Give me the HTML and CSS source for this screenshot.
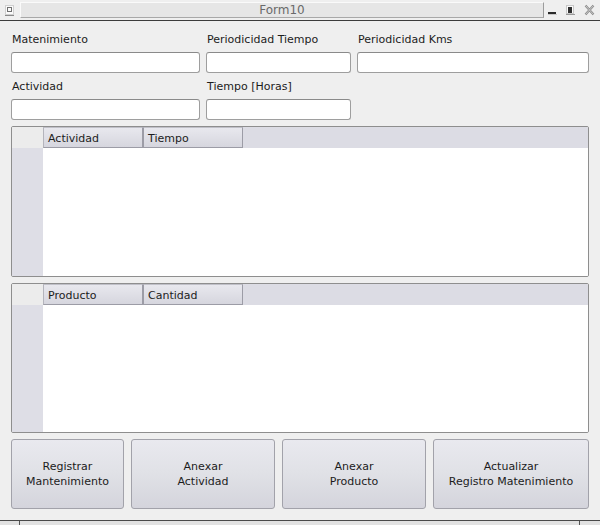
FILE: index.html
```html
<!DOCTYPE html>
<html>
<head>
<meta charset="utf-8">
<title>Form10</title>
<link rel="stylesheet" href="styles.css">
</head>
<body>
<div class="window">
  <div class="titlebar">
    <svg class="menu-icon" width="9" height="11" viewBox="0 0 9 11">
      <rect x="0.5" y="0.5" width="8" height="9" fill="#fafafa" stroke="#d0d0d0"/>
      <rect x="2.5" y="2.5" width="4" height="4" fill="none" stroke="#707070"/>
      <line x1="0" y1="10.5" x2="9" y2="10.5" stroke="#8a8a8a"/>
    </svg>
    <div class="title">Form10</div>
    <div class="wm-buttons">
      <svg width="9" height="11" viewBox="0 0 9 11"><rect x="0" y="7" width="8" height="2" fill="#2a2a2a"/><rect x="0" y="9" width="9" height="1" fill="#c8c8c8"/></svg>
      <svg width="9" height="11" viewBox="0 0 9 11"><rect x="0.5" y="0.5" width="7" height="8" fill="#fafafa" stroke="#c8c8c8"/><rect x="2" y="2" width="4" height="6" fill="#303030"/><rect x="0" y="9" width="9" height="1" fill="#9a9a9a"/></svg>
      <svg width="11" height="12" viewBox="0 0 11 12"><path d="M1.5 1.5 L9.5 10.5 M9.5 1.5 L1.5 10.5" stroke="#8a8a8a" stroke-width="2.2"/><path d="M1.5 1.5 L9.5 10.5 M9.5 1.5 L1.5 10.5" stroke="#d8d8d8" stroke-width="0.8"/></svg>
    </div>
  </div>

  <div class="content">
    <div class="fields">
      <label class="lbl">Matenimiento</label>
      <label class="lbl">Periodicidad Tiempo</label>
      <label class="lbl">Periodicidad Kms</label>
      <input class="inp" type="text">
      <input class="inp" type="text">
      <input class="inp" type="text">
      <label class="lbl">Actividad</label>
      <label class="lbl">Tiempo [Horas]</label>
      <span></span>
      <input class="inp" type="text">
      <input class="inp" type="text">
      <span></span>
    </div>

    <div class="tbl tbl-first">
      <div class="corner"></div>
      <div class="hdr"><div class="hcell">Actividad</div><div class="hcell">Tiempo</div></div>
      <div class="rowhdr"></div>
      <div class="tbody"></div>
    </div>

    <div class="tbl tbl-second">
      <div class="corner"></div>
      <div class="hdr"><div class="hcell">Producto</div><div class="hcell">Cantidad</div></div>
      <div class="rowhdr"></div>
      <div class="tbody"></div>
    </div>

    <div class="buttons">
      <button class="btn">Registrar<br>Mantenimiento</button>
      <button class="btn">Anexar<br>Actividad</button>
      <button class="btn">Anexar<br>Producto</button>
      <button class="btn">Actualizar<br>Registro Matenimiento</button>
    </div>
  </div>

  <div class="statusbar">
    <div class="sb-left"></div>
    <div class="sb-mid"></div>
    <div class="sb-right"></div>
  </div>
</div>
</body>
</html>
```

FILE: styles.css
```css
* { box-sizing: border-box; }
html, body {
  margin: 0;
  padding: 0;
  width: 600px;
  height: 525px;
  overflow: hidden;
  background: #efefef;
  font-family: "DejaVu Sans", "Liberation Sans", sans-serif;
  font-size: 11px;
  color: #1c1c1c;
}
.window {
  width: 600px;
  height: 525px;
  display: flex;
  flex-direction: column;
  background: #efefef;
}
.titlebar {
  height: 21px;
  flex: 0 0 21px;
  border-bottom: 1px solid #3c3c3c;
  display: flex;
  align-items: flex-start;
  background: #efefef;
}
.menu-icon {
  margin: 5px 0 0 5px;
  flex: 0 0 auto;
}
.title {
  margin: 2px 0 0 6px;
  width: 524px;
  height: 16px;
  background: #e6e6e6;
  border: 1px solid #d0d0d0;
  border-right-color: #9c9c9c;
  border-bottom-color: #a8a8a8;
  border-top-color: #fafafa;
  border-left-color: #fafafa;
  color: #6a6a6a;
  font-size: 12px;
  line-height: 14px;
  text-align: center;
}
.wm-buttons {
  display: flex;
  align-items: flex-start;
  margin-left: auto;
  padding-right: 5px;
}
.wm-buttons svg:nth-child(1) { margin: 5px 0 0 0; }
.wm-buttons svg:nth-child(2) { margin: 5px 0 0 9px; }
.wm-buttons svg:nth-child(3) { margin: 4px 0 0 9px; }

.content {
  flex: 1 1 auto;
  padding: 10px 11px 0 11px;
  display: flex;
  flex-direction: column;
}
.fields {
  display: grid;
  grid-template-columns: 189px 145px 1fr;
  grid-template-rows: 16px 21px 16px 21px;
  column-gap: 6px;
  row-gap: 5px;
}
.lbl {
  line-height: 17px;
  padding-left: 1px;
  white-space: nowrap;
}
.inp {
  height: 21px;
  border: 1px solid #9e9e9e;
  border-top-color: #8a8a8a;
  border-radius: 3px;
  background: #ffffff;
  margin: 0;
  padding: 0 4px;
  font: inherit;
}

.tbl {
  display: grid;
  grid-template-columns: 31px 1fr;
  grid-template-rows: 21px 1fr;
  border: 1px solid #8e8e8e;
  border-radius: 2px;
  background: #ffffff;
  overflow: hidden;
}
.tbl-first { margin-top: 6px; height: 151px; }
.tbl-second { margin-top: 6px; height: 150px; }
.corner { background: #ececec; }
.hdr {
  display: flex;
  background: #dcdce4;
}
.hcell {
  width: 100px;
  height: 21px;
  padding-left: 4px;
  line-height: 21px;
  background: linear-gradient(#e8e8ee, #d6d6de);
  border: 1px solid #9c9ca6;
  border-left-color: #b4b4bc;
  border-top-color: #c0c0c8;
}
.hcell + .hcell { border-left: 1px solid #9c9ca6; }
.rowhdr { background: #dedee6; }
.tbody { background: #ffffff; }

.buttons {
  margin-top: 6px;
  display: grid;
  grid-template-columns: 113px 144px 144px 1fr;
  column-gap: 7px;
  height: 70px;
}
.btn {
  font: inherit;
  color: #1c1c1c;
  line-height: 15px;
  border: 1px solid #a2a2aa;
  border-radius: 3px;
  background: linear-gradient(#e9e9ef 0%, #e0e1e6 50%, #d4d4dc 100%);
  padding: 0;
  margin: 0;
}

.statusbar {
  flex: 0 0 5px;
  height: 5px;
  border-top: 1px solid #4a4a4a;
  display: flex;
  background: #e2e2e2;
}
.sb-left { width: 20px; border-right: 1px solid #555; }
.sb-mid { flex: 1; }
.sb-right { width: 21px; border-left: 1px solid #555; }
```
